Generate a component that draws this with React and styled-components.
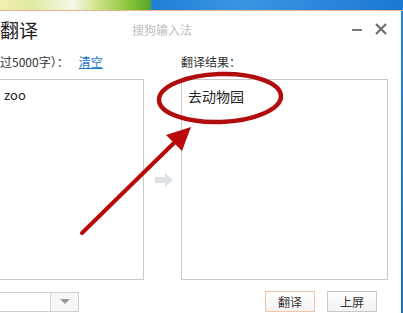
import React from 'react';
import styled, { createGlobalStyle } from 'styled-components';

const GlobalStyle = createGlobalStyle`
    html, body {
        margin: 0;
        padding: 0;
        overflow: hidden;
    }
    body {
        width: 403px;
        height: 313px;
        background: linear-gradient(180deg, #2a86dc 0%, #1a6cc4 100%);
        font-family: 'Noto Sans CJK SC', 'Noto Sans', sans-serif;
    }
`;

const Desktop = styled.div`
    position: relative;
    width: 403px;
    height: 313px;
`;

const Wallpaper = styled.div`
    height: 10px;
    background: linear-gradient(
        90deg,
        #eef0b0 0%,
        #e0eaa0 8%,
        #f4f8e8 18%,
        #cfe58a 24%,
        #8ac43a 32%,
        #5aa82c 37%,
        #1f7fd6 38%,
        #3b95e4 60%,
        #1c77d2 100%
    );
    border-bottom: 1px solid #e9b28c;
`;

const Window = styled.div`
    width: 401px;
    height: 302px;
    background: #fff;
    display: flex;
    flex-direction: column;
    color: #333;
`;

const TitleBar = styled.div`
    height: 36px;
    display: flex;
    align-items: center;
    padding-right: 12px;
`;

const Title = styled.div`
    font-size: 19px;
    width: 132px;
    color: #222;
`;

const Brand = styled.div`
    font-size: 12px;
    color: #bdbdbd;
    flex: 1;
`;

const WinButton = styled.button`
    border: 0;
    background: none;
    padding: 0;
    width: 16px;
    height: 16px;
    margin-left: 8px;
    display: flex;
    align-items: center;
    justify-content: center;
`;

const Columns = styled.div`
    display: grid;
    grid-template-columns: 144px 37px 207px;
`;

const LabelRow = styled(Columns)`
    margin-top: 8px;
    height: 14px;
    font-size: 12px;
    line-height: 14px;
    align-items: center;
`;

const Label = styled.span`
    white-space: nowrap;
`;

const ClearLink = styled.a`
    color: #1a74c6;
    text-decoration: underline;
    margin-left: 10px;
`;

const PaneRow = styled(Columns)`
    margin-top: 10px;
    height: 201px;
`;

const Pane = styled.div`
    border: 1px solid #c9c9c9;
    border-left: ${(p) => (p.cut ? '0' : '1px solid #c9c9c9')};
    font-size: ${(p) => (p.big ? '14px' : '13px')};
    padding: ${(p) => (p.big ? '6px 6px' : '5px 4px')};
    line-height: 20px;
    color: #222;
`;

const ArrowSlot = styled.div`
    display: flex;
    align-items: center;
    justify-content: center;
    padding-left: 2px;
`;

const Footer = styled.div`
    margin-top: 11px;
    display: flex;
    align-items: center;
    padding-right: 24px;
`;

const Select = styled.div`
    display: flex;
    height: 18px;
    border: 1px solid #cfcfcf;
    border-left: 0;
    width: 78px;
`;

const SelectField = styled.div`
    flex: 1;
`;

const SelectButton = styled.div`
    width: 27px;
    border-left: 1px solid #d6d6d6;
    background: #f7f7f7;
    display: flex;
    align-items: center;
    justify-content: center;
`;

const Spacer = styled.div`
    flex: 1;
`;

const Button = styled.button`
    width: 50px;
    height: 21px;
    margin-left: 12px;
    padding: 0;
    font-family: inherit;
    font-size: 12px;
    color: #333;
    background: linear-gradient(180deg, #ffffff 0%, #f3f3f3 100%);
    border: 1px solid ${(p) => (p.primary ? '#f1c4a8' : '#c8c8c8')};
`;

const Overlay = styled.svg`
    position: absolute;
    left: 0;
    top: 0;
    pointer-events: none;
`;

export default function App() {
    return (
        <Desktop>
            <GlobalStyle />
            <Wallpaper />
            <Window>
                <TitleBar>
                    <Title>翻译</Title>
                    <Brand>搜狗输入法</Brand>
                    <WinButton aria-label='minimize'>
                        <svg width='12' height='12' viewBox='0 0 12 12'>
                            <path d='M1 7h10' stroke='#7a7a7a' strokeWidth='2' />
                        </svg>
                    </WinButton>
                    <WinButton aria-label='close'>
                        <svg width='12' height='12' viewBox='0 0 12 12'>
                            <path d='M1 1l10 10M11 1L1 11' stroke='#6a6a6a' strokeWidth='2' />
                        </svg>
                    </WinButton>
                </TitleBar>
                <LabelRow>
                    <Label>
                        过5000字）：<ClearLink>清空</ClearLink>
                    </Label>
                    <span />
                    <Label>翻译结果：</Label>
                </LabelRow>
                <PaneRow>
                    <Pane cut>zoo</Pane>
                    <ArrowSlot>
                        <svg width='20' height='16' viewBox='0 0 20 16'>
                            <path d='M1 5h10V1l8 7-8 7v-4H1z' fill='#dde2e6' />
                        </svg>
                    </ArrowSlot>
                    <Pane big>去动物园</Pane>
                </PaneRow>
                <Footer>
                    <Select>
                        <SelectField />
                        <SelectButton>
                            <svg width='10' height='6' viewBox='0 0 10 6'>
                                <path d='M0 0h10L5 5z' fill='#9a9a9a' />
                            </svg>
                        </SelectButton>
                    </Select>
                    <Spacer />
                    <Button primary>翻译</Button>
                    <Button>上屏</Button>
                </Footer>
            </Window>
            <Overlay width='403' height='313' viewBox='0 0 403 313'>
                <ellipse
                    cx='220'
                    cy='98'
                    rx='61'
                    ry='24'
                    transform='rotate(-2 220 98)'
                    fill='none'
                    stroke='#b10d0d'
                    strokeWidth='4.5'
                />
                <path d='M82 233L178 139' stroke='#b80a0a' strokeWidth='4' strokeLinecap='round' />
                <path d='M191 127L166 135L182 151z' fill='#b80a0a' />
            </Overlay>
        </Desktop>
    );
}
